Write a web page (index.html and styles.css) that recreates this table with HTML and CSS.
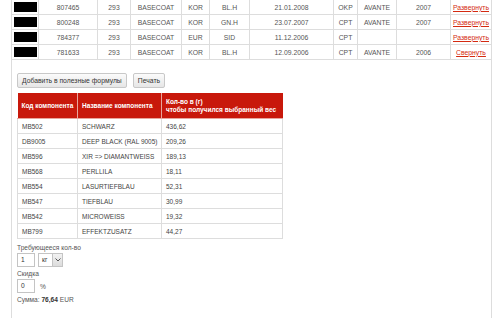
FILE: index.html
```html
<!DOCTYPE html>
<html>
<head>
<meta charset="utf-8">
<link rel="stylesheet" href="styles.css">
</head>
<body>
<div class="page">
  <table class="orders">
    <colgroup>
      <col style="width:27px"><col style="width:59px"><col style="width:33px"><col style="width:51px"><col style="width:28px"><col style="width:40px"><col style="width:84px"><col style="width:24px"><col style="width:39px"><col style="width:54px"><col style="width:41px">
    </colgroup>
    <tr><td><span class="blk"></span></td><td>807465</td><td>293</td><td>BASECOAT</td><td>KOR</td><td>BL.H</td><td>21.01.2008</td><td>OKP</td><td>AVANTE</td><td>2007</td><td><a href="#">Развернуть</a></td></tr>
    <tr><td><span class="blk"></span></td><td>800248</td><td>293</td><td>BASECOAT</td><td>KOR</td><td>GN.H</td><td>23.07.2007</td><td>CPT</td><td>AVANTE</td><td>2007</td><td><a href="#">Развернуть</a></td></tr>
    <tr><td><span class="blk"></span></td><td>784377</td><td>293</td><td>BASECOAT</td><td>EUR</td><td>SID</td><td>11.12.2006</td><td>CPT</td><td></td><td></td><td><a href="#">Развернуть</a></td></tr>
    <tr><td><span class="blk"></span></td><td>781633</td><td>293</td><td>BASECOAT</td><td>KOR</td><td>BL.H</td><td>12.09.2006</td><td>CPT</td><td>AVANTE</td><td>2006</td><td><a href="#">Свернуть</a></td></tr>
  </table>

  <div class="detail">
    <div class="buttons">
      <button class="btn">Добавить в полезные формулы</button>
      <button class="btn">Печать</button>
    </div>

    <table class="formula">
      <colgroup><col style="width:60px"><col style="width:84px"><col style="width:121px"></colgroup>
      <tr class="head"><th>Код компонента</th><th>Название компонента</th><th>Кол-во в (г)<br>чтобы получился выбранный вес</th></tr>
      <tr><td>MB502</td><td>SCHWARZ</td><td>436,62</td></tr>
      <tr><td>DB9005</td><td>DEEP BLACK (RAL 9005)</td><td>209,26</td></tr>
      <tr><td>MB596</td><td>XIR =&gt; DIAMANTWEISS</td><td>189,13</td></tr>
      <tr><td>MB568</td><td>PERLLILA</td><td>18,11</td></tr>
      <tr><td>MB554</td><td>LASURTIEFBLAU</td><td>52,31</td></tr>
      <tr><td>MB547</td><td>TIEFBLAU</td><td>30,99</td></tr>
      <tr><td>MB542</td><td>MICROWEISS</td><td>19,32</td></tr>
      <tr><td>MB799</td><td>EFFEKTZUSATZ</td><td>44,27</td></tr>
    </table>

    <div class="form">
      <div class="label">Требующееся кол-во</div>
      <div class="row">
        <span class="inp">1</span>
        <span class="sel"><span class="selv">кг</span><span class="arrow"><svg width="6" height="4" viewBox="0 0 6 4"><path d="M0.5 0.5 L3 3 L5.5 0.5" fill="none" stroke="#555" stroke-width="1"/></svg></span></span>
      </div>
      <div class="label">Скидка</div>
      <div class="row">
        <span class="inp">0</span>
        <span class="unit">%</span>
      </div>
      <div class="sum">Сумма: <b>76,64</b> EUR</div>
    </div>
  </div>
</div>
</body>
</html>
```
FILE: styles.css
```css
html, body {
  margin: 0;
  padding: 0;
  background: #fff;
  height: 100%;
}
body {
  font-family: "Liberation Sans", Arial, sans-serif;
  font-size: 6.6px;
  color: #444;
}
.page {
  margin-left: 11px;
  width: 479px;
  min-height: 319px;
  border-left: 1px solid #ddd;
  border-right: 1px solid #ddd;
}
.orders {
  border-collapse: collapse;
  table-layout: fixed;
  width: 481px;
  margin-left: -1px;
  margin-top: -1px;
}
.orders td {
  border: 1px solid #ddd;
  height: 14px;
  padding: 0;
  text-align: center;
  color: #555;
  font-size: 6.8px;
  white-space: nowrap;
  overflow: hidden;
}
.orders td:first-child {
  text-align: left;
}
.blk {
  display: block;
  width: 23px;
  height: 10px;
  margin-left: 2px;
  background: #000;
}
.orders a {
  color: #d42a10;
  text-decoration: underline;
}
.detail {
  padding: 13px 0 0 5px;
}
.buttons {
  display: flex;
  gap: 6px;
  margin-bottom: 5px;
}
.btn {
  font-family: "Liberation Sans", Arial, sans-serif;
  font-size: 6.8px;
  color: #333;
  height: 15px;
  padding: 0 4px;
  border: 1px solid #c8c8c8;
  border-radius: 2px;
  background: linear-gradient(#fbfbfb, #e6e6e6);
  line-height: 13px;
}
.formula {
  border-collapse: collapse;
  table-layout: fixed;
  width: 265px;
}
.formula th {
  background: #c8180b;
  color: #fff;
  font-weight: bold;
  text-align: left;
  padding: 0 4px;
  height: 25px;
  line-height: 8px;
  border: 1px solid #e8a59c;
  border-top: none;
  white-space: nowrap;
  font-size: 6.5px;
}
.formula th:first-child { border-left: none; }
.formula th:last-child { border-right: none; }
.formula td {
  border: 1px solid #ddd;
  height: 14px;
  padding: 0 4px;
  color: #444;
  white-space: nowrap;
  font-size: 6.5px;
}
.form {
  padding-top: 4px;
}
.label {
  line-height: 9px;
  color: #555;
}
.row {
  display: flex;
  align-items: center;
  gap: 3px;
  margin: 1px 0 2px;
}
.inp {
  box-sizing: border-box;
  width: 18px;
  height: 14px;
  border: 1px solid #c4c4c4;
  padding-left: 3px;
  line-height: 12px;
  color: #333;
}
.sel {
  box-sizing: border-box;
  display: flex;
  width: 25px;
  height: 14px;
  border: 1px solid #c4c4c4;
}
.selv {
  flex: 1;
  padding-left: 3px;
  line-height: 12px;
  color: #333;
}
.arrow {
  width: 9px;
  background: linear-gradient(#f2f2f2, #dcdcdc);
  border-left: 1px solid #c4c4c4;
  display: flex;
  align-items: center;
  justify-content: center;
}
.unit {
  color: #555;
  margin-left: 2px;
}
.sum {
  color: #555;
  line-height: 10px;
}
.sum b {
  color: #333;
}
```
